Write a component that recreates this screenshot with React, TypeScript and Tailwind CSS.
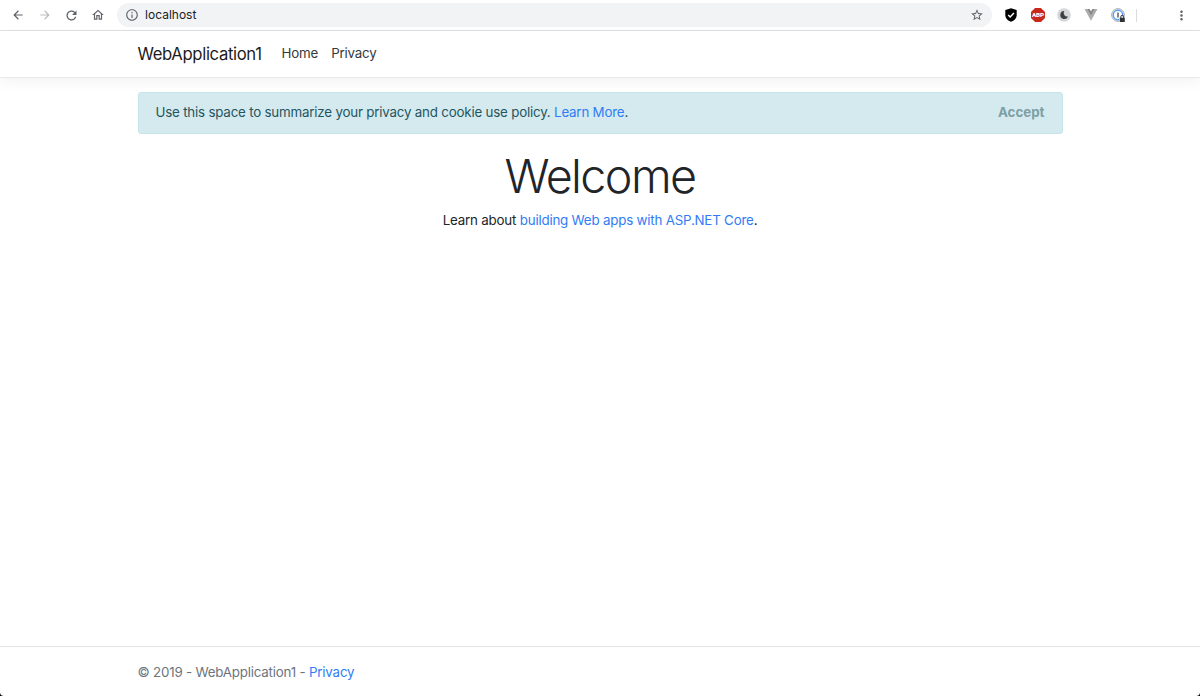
import {
    MdArrowBack,
    MdArrowForward,
    MdMoreVert,
    MdOutlineHome,
    MdOutlineInfo,
    MdRefresh,
    MdStarBorder,
} from "react-icons/md";

const NAV_LINKS = [
    { label: "Home", className: "tracking-[-0.2px]" },
    { label: "Privacy", className: "tracking-[-0.2px]" },
];

const ShieldIcon = () => (
    <svg width="14" height="14" viewBox="0 0 14 14">
        <path d="M7 .3 12.7 2v5.2c0 3-2.3 5.3-5.7 6.5C3.600 12.500 1.300 10.200 1.300 7.200V2z" fill="#000" />
        <path d="m4.200 7 2 2 3.700-4" fill="none" stroke="#fff" strokeWidth="1.500" />
    </svg>
);

const AdblockIcon = () => (
    <svg width="14" height="14" viewBox="0 0 14 14">
        <path d="M4.100 0h5.800L14 4.100v5.800L9.900 14H4.100L0 9.900V4.100z" fill="#c8281c" />
        <text
            x="7"
            y="9.300"
            textAnchor="middle"
            fill="#fff"
            fontFamily="Roboto, sans-serif"
            fontSize="6.200"
            fontWeight="900"
        >
            ABP
        </text>
    </svg>
);

const MoonIcon = () => (
    <svg width="14" height="14" viewBox="0 0 14 14">
        <circle cx="7" cy="7" r="6.800" fill="#d5d6d7" />
        <path d="M7.300 3a4 4 0 1 0 3.700 5.400A3.500 3.500 0 0 1 7.300 3z" fill="#3c4043" />
    </svg>
);

const VueIcon = () => (
    <svg width="14" height="14" viewBox="0 0 14 14">
        <path d="M.5 1h3L7 7l3.500-6h3L7 12.700z" fill="#adadad" />
        <path d="M3.300 1h2.300L7 3.500 8.400 1h2.300L7 7.500z" fill="#858585" />
    </svg>
);

const PasswordIcon = () => (
    <svg width="15" height="15" viewBox="0 0 15 15">
        <circle cx="7" cy="7" r="6.300" fill="#f4f5f6" stroke="#9ea3a8" strokeWidth="1" />
        <circle cx="7" cy="7" r="4.700" fill="#fff" stroke="#589df6" strokeWidth="1.400" />
        <path d="M7 4.500v5" stroke="#5b6067" strokeWidth="1.500" />
        <path d="M8 8.500h6.500V15H8z" fill="#fff" />
        <path d="M8.700 9.700h5.100v4.300H8.700z" fill="#303236" />
        <path d="M9.800 10V8.800a1.450 1.450 0 0 1 2.900 0V10" fill="none" stroke="#303236" />
    </svg>
);

const BrowserBar = () => (
    <div className="flex h-[31px] shrink-0 items-center border-b border-[#dfe1e3] bg-white pr-[11px] pl-[11px] text-[#5f6368]">
        <div className="flex items-center gap-[12.7px]">
            <MdArrowBack size={14} />
            <MdArrowForward size={14} className="text-[#babcbe]" />
            <MdRefresh size={15} className="-mx-[0.5px]" />
            <MdOutlineHome size={14} />
        </div>
        <div className="ml-[12px] flex h-[24px] w-[875px] items-center rounded-full bg-[#f1f3f4] pr-[8px] pl-[8px]">
            <MdOutlineInfo size={14} />
            <span className="ml-[6px] text-[12px] text-[#202124]">localhost</span>
            <MdStarBorder size={14} className="ml-auto" />
        </div>
        <div className="ml-[12px] flex items-center gap-[12.7px]">
            <ShieldIcon />
            <AdblockIcon />
            <MoonIcon />
            <VueIcon />
            <PasswordIcon />
        </div>
        <div className="ml-[10px] h-[13px] w-px bg-[#dadce0]" />
        <MdMoreVert size={15} className="ml-auto" />
    </div>
);

const Navbar = () => (
    <header className="h-[47px] shrink-0 border-b border-[#e7e8e9] bg-white shadow-[0_4px_12px_rgba(0,0,0,0.05)]">
        <div className="mx-auto flex h-full w-[925px] items-center">
            <a className="text-[16.67px] tracking-[-0.35px] text-[#1b1b1b]">WebApplication1</a>
            <nav className="ml-[20px] flex gap-[13px] text-[13.33px] text-[#343a40]">
                {NAV_LINKS.map((link) => (
                    <a key={link.label} className={link.className}>
                        {link.label}
                    </a>
                ))}
            </nav>
        </div>
    </header>
);

const CookieConsent = () => (
    <div className="flex h-[42px] items-center justify-between rounded-[3px] border border-[#c6e5eb] bg-[#d5eaee] px-[17px] text-[13.33px] text-[#1f5561]">
        <p className="tracking-[-0.2px]">
            Use this space to summarize your privacy and cookie use policy.{" "}
            <a className="text-[#2f7cf6]">Learn More</a>.
        </p>
        <button className="font-bold text-[#7c9fa6]">Accept</button>
    </div>
);

const App = () => (
    <div className="h-[696px] bg-black">
        <div className="flex h-full flex-col overflow-hidden rounded-b-[4px] bg-white font-[Inter,sans-serif] text-[#212529]">
            <BrowserBar />
            <Navbar />
            <main className="mx-auto w-[925px] flex-1 pt-[13.5px]">
                <CookieConsent />
                <div className="text-center">
                    <h1 className="mt-[14px] text-[46.67px] leading-[56px] font-light tracking-[-1.6px]">
                        Welcome
                    </h1>
                    <p className="mt-[6px] text-[13.33px] leading-[20px] tracking-[-0.2px]">
                        Learn about{" "}
                        <a className="text-[#2f7cf6]">building Web apps with ASP.NET Core</a>.
                    </p>
                </div>
            </main>
            <footer className="h-[50px] shrink-0 border-t border-[#e3e5e7]">
                <p className="mx-auto w-[925px] text-[13.33px] leading-[50px] tracking-[-0.2px] text-[#6c757d]">
                    © 2019 - WebApplication1 - <a className="text-[#2f7cf6]">Privacy</a>
                </p>
            </footer>
        </div>
    </div>
);

export default App;
